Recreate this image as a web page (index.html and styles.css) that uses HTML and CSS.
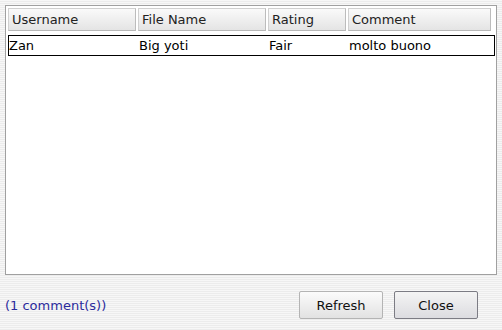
FILE: index.html
```html
<!DOCTYPE html>
<html>
  <head>
    <meta charset="UTF-8" />
    <title>Comments</title>
    <link rel="stylesheet" href="styles.css">
  </head>
  <body>
    <div class="dialog">
      <div class="list">
        <div class="header">
          <div class="col">Username</div>
          <div class="col">File Name</div>
          <div class="col">Rating</div>
          <div class="col">Comment</div>
        </div>
        <div class="row selected">
          <div class="cell">Zan</div>
          <div class="cell">Big yoti</div>
          <div class="cell">Fair</div>
          <div class="cell">molto buono</div>
        </div>
      </div>

      <div class="footer">
        <span class="count">(1 comment(s))</span>
        <div class="buttons">
          <button>Refresh</button>
          <button class="focus">Close</button>
        </div>
      </div>
    </div>
  </body>
</html>
```

FILE: styles.css
```css
html,
body {
  margin: 0;
  width: 502px;
  height: 330px;
  overflow: hidden;
}

body {
  font-family: "DejaVu Sans", sans-serif;
  font-size: 13px;
  color: #111;
  background: repeating-linear-gradient(#f7f7f7 0, #f7f7f7 1px, #ececec 1px, #ececec 2px);
}

.dialog {
  display: flex;
  flex-direction: column;
  height: 100%;
}

.list {
  margin: 5px 5px 0 5px;
  height: 264px;
  background: white;
  border: 1px solid #a0a0a0;
  padding: 2px 1px 2px 2px;
}

.header {
  display: grid;
  grid-template-columns: 128px 128px 78px 143px;
  column-gap: 2px;
  height: 23px;
}

.col {
  display: flex;
  align-items: center;
  padding-left: 3px;
  border: 1px solid #d0d0d0;
  border-right-color: #bcbcbc;
  border-bottom-color: #b8b8b8;
  background: linear-gradient(#fafafa, #e4e4e4);
  color: #222;
}

.row {
  display: grid;
  grid-template-columns: 130px 130px 80px 1fr;
  height: 19px;
  margin-top: 4px;
  align-items: center;
  border: 1px solid #000;
  color: #000;
}

.cell {
  padding-left: 0;
}

.footer {
  display: flex;
  align-items: center;
  justify-content: space-between;
  padding: 16px 24px 0 5px;
}

.count {
  color: #2b2b9c;
}

.buttons {
  display: flex;
  gap: 11px;
}

button {
  width: 84px;
  height: 28px;
  font-family: "DejaVu Sans", sans-serif;
  font-size: 13px;
  color: #111;
  background: linear-gradient(#fbfbfb, #e2e2e2);
  border: 1px solid #b4b4b4;
  border-radius: 2px;
}

button.focus {
  border-color: #7c7c84;
  background: linear-gradient(#f4f4f4, #dcdce0);
}
```
